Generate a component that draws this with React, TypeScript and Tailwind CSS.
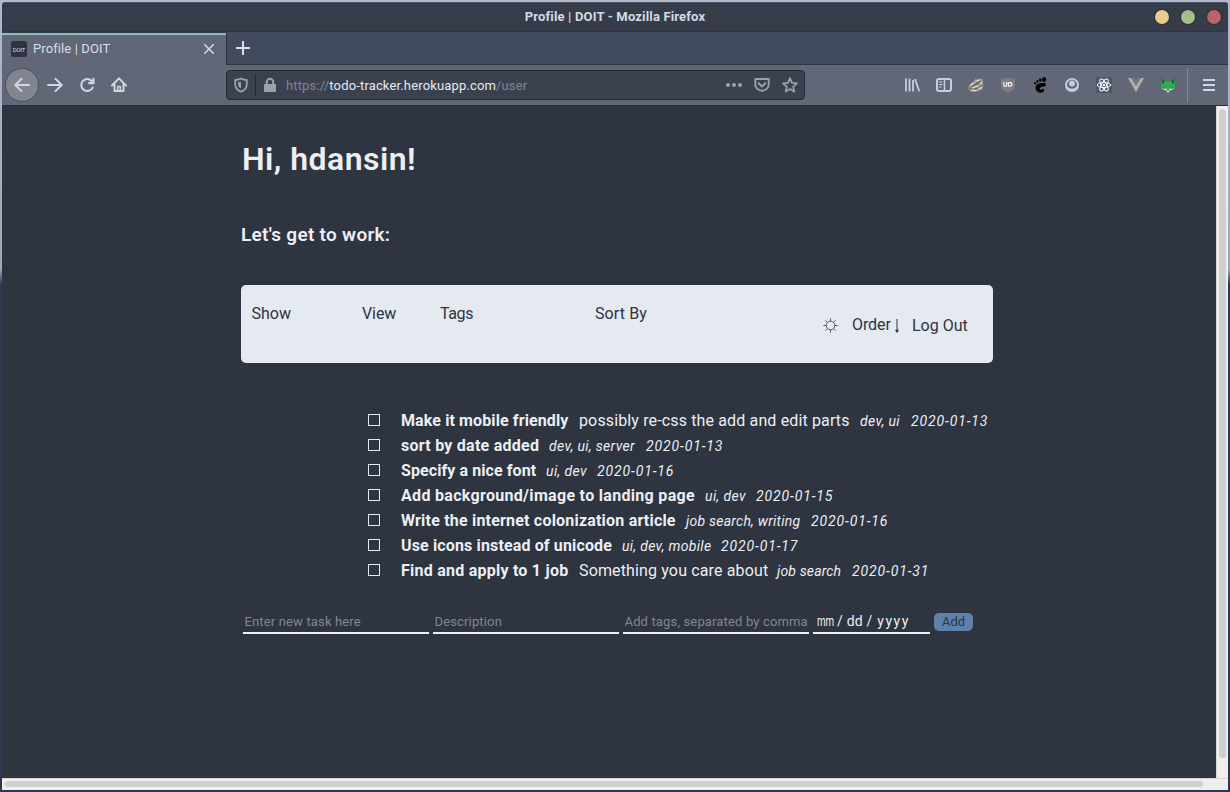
import type { ReactNode } from "react";

type Task = {
  title: string;
  titleClass: string;
  note?: string;
  noteClass?: string;
  tags: string;
  tagsClass: string;
  date: string;
};

const tasks: Task[] = [
  { title: "Make it mobile friendly", titleClass: "w-[168px] tracking-[0.11px]", note: "possibly re-css the add and edit parts", noteClass: "w-[271px]", tags: "dev, ui", tagsClass: "w-[41px] tracking-[0.35px]", date: "2020-01-13" },
  { title: "sort by date added", titleClass: "w-[138px] tracking-[0.25px]", tags: "dev, ui, server", tagsClass: "w-[87px] tracking-[0.34px]", date: "2020-01-13" },
  { title: "Specify a nice font", titleClass: "w-[135px] tracking-[0.08px]", tags: "ui, dev", tagsClass: "w-[41px] tracking-[0.4px]", date: "2020-01-16" },
  { title: "Add background/image to landing page", titleClass: "w-[294px] tracking-[0.31px]", tags: "ui, dev", tagsClass: "w-[41px] tracking-[0.4px]", date: "2020-01-15" },
  { title: "Write the internet colonization article", titleClass: "w-[275px] tracking-[0.2px]", tags: "job search, writing", tagsClass: "w-[115px] tracking-[0.24px]", date: "2020-01-16" },
  { title: "Use icons instead of unicode", titleClass: "w-[211px] tracking-[0.14px]", tags: "ui, dev, mobile", tagsClass: "w-[89px] tracking-[0.32px]", date: "2020-01-17" },
  { title: "Find and apply to 1 job", titleClass: "w-[168px] tracking-[0.24px]", note: "Something you care about", noteClass: "w-[188px]", tags: "job search", tagsClass: "w-[65px] tracking-[0.15px]", date: "2020-01-31" },
];

function Icon({ children, className = "" }: { children: ReactNode; className?: string }) {
  return (
    <svg viewBox="0 0 16 16" className={"h-4 w-4 shrink-0 " + className} fill="none" stroke="currentColor" strokeWidth="2" strokeLinecap="round" strokeLinejoin="round">
      {children}
    </svg>
  );
}

function TitleBar() {
  return (
    <div className="flex h-[29px] shrink-0 items-center rounded-t-[3px] border-t border-[#4a5261] bg-[#363c49]">
      <div className="w-[90px]" />
      <div className="flex-1 pb-px text-center text-[13px] font-bold tracking-[0.16px] text-[#d3dae6]">Profile | DOIT - Mozilla Firefox</div>
      <div className="flex w-[90px] justify-end gap-3 pr-[7px]">
        <i className="h-[14px] w-[14px] rounded-full bg-[#ebcb8b] ring-1 ring-[#292e39]" />
        <i className="h-[14px] w-[14px] rounded-full bg-[#a3be8c] ring-1 ring-[#292e39]" />
        <i className="h-[14px] w-[14px] rounded-full bg-[#bf616a] ring-1 ring-[#292e39]" />
      </div>
    </div>
  );
}

function Tabs() {
  return (
    <div className="flex h-[34px] shrink-0 border-t border-[#2e3440] bg-[#434c5e]">
      <div className="w-[224px] bg-[#363c49] pt-px">
        <div className="flex h-8 items-center border-t-2 border-[#8fbcbb] bg-[#616776] pb-[2px] pl-[9px] text-[13px] text-[#d8dee9]">
          <span className="flex h-4 w-4 items-center justify-center rounded-[2px] bg-[#2e3440] text-[6px] tracking-[-0.2px]">DOIT</span>
          <span className="ml-[6px] flex-1 tracking-[0.1px]">Profile | DOIT</span>
          <Icon className="mr-[9px] text-[#d0d6e2]"><path d="M3.7 3.7l8.6 8.6M12.3 3.7l-8.6 8.6" strokeWidth="1.6" /></Icon>
        </div>
      </div>
      <div className="flex flex-1 items-center border-b border-l border-[#2e3440] pl-[8px] text-[#d8dee9]">
        <Icon><path d="M8 1v14M1 8h14" strokeLinecap="butt" /></Icon>
      </div>
    </div>
  );
}

function UrlBar() {
  return (
    <div className="ml-[99px] flex h-[30px] w-[579px] items-center rounded-[4px] border border-[#242933] bg-[#3c4150] pl-[6px] text-[#9ca1b0]">
      <Icon>
        <path d="M8 1.5C6 2.6 4 3 2.2 3v4.2c0 4 2.6 6.3 5.8 7.4 3.2-1.1 5.800-3.400 5.800-7.400V3C12 3 10 2.600 8 1.500z" strokeWidth="1.8" />
        <path d="M8 4.600v7C6 10.500 5 9.200 5 7.200V5.200C6.200 5.100 7 5 8 4.600z" fill="currentColor" stroke="none" />
      </Icon>
      <div className="mx-[6px] h-[22px] w-px bg-[#242933]" />
      <Icon>
        <rect x="2" y="7" width="12" height="8" rx="1" fill="currentColor" stroke="none" />
        <path d="M4.800 8V5a3.200 3.200 0 0 1 6.400 0v3" />
      </Icon>
      <div className="ml-2 flex-1 pt-px text-[13px] tracking-[0.15px] text-[#7d8596]">https://<span className="text-[#e5e9f0]">todo-tracker.herokuapp.com</span>/user</div>
      <Icon className="mr-3"><g fill="currentColor" stroke="none"><circle cx="2" cy="8" r="2" /><circle cx="8" cy="8" r="2" /><circle cx="14" cy="8" r="2" /></g></Icon>
      <Icon className="mr-3">
        <path d="M1.300 2h13.400v5.500a6.700 6.200 0 0 1-13.400 0z" strokeWidth="1.900" />
        <path d="M4.700 6.300L8 9.400l3.300-3.100" />
      </Icon>
      <Icon className="mr-[6px]"><path d="M8 1.200l2 4.600 5 .5-3.800 3.300 1.100 5L8 12l-4.300 2.600 1.100-5L1 6.300l5-.5z" strokeWidth="1.700" /></Icon>
    </div>
  );
}

function Extensions() {
  return (
    <div className="flex items-center gap-4 text-[#c8ced9]">
      <Icon><path d="M2 1.500v13M5.500 1.500v13M9 3v11.500M11 2l4.200 12.300" strokeLinecap="butt" strokeWidth="1.800" /></Icon>
      <Icon>
        <rect x="1" y="2" width="14" height="12" rx="2" />
        <path d="M8.500 2v12" strokeWidth="1.500" />
        <path d="M3.300 5h3M3.300 7.500h3M3.300 10h2" strokeWidth="1" />
      </Icon>
      <Icon>
        <path d="M.3 10l1.700-3 4.500-3.500L7.500 1l2 1.200L13 1.300l2.500 2-.8 2.700 1 2-1.200 4.500-3.700 1.500-2.800 1.200-5-.4-2.500-2z" fill="#9d9d95" stroke="#686963" strokeWidth=".5" />
        <path d="M2.500 8.300l3-2.300M8 4.300l4-1.500M5 10.800l5-1.800M12 7l2-1.500M4 13.600l4-.2M11 12l2.500-1.500" stroke="#dcdbd2" strokeWidth="1.200" />
        <path d="M3 10l4-2.500 4-1M8.500 6l4-1.800M6 12.300l4-1.500M12 9.500l2-1M2 12l1.500-.5" stroke="#4c4e49" strokeWidth=".9" />
      </Icon>
      <Icon>
        <path d="M8 .3c2 1.200 4.500 1.700 7 1.800v5.500c0 4-3 6.600-7 8.200-4-1.600-7-4.200-7-8.200V2.100C3.500 2 6 1.500 8 .300z" fill="#7e7e7e" stroke="none" />
        <path d="M3.900 5.500V8a1.400 1.400 0 0 0 2.800 0V5.500M8.500 5.600h1.600a1.800 1.800 0 0 1 0 3.600H8.500z" stroke="#f0f0f0" strokeWidth="1.300" />
      </Icon>
      <Icon className="text-black">
        <g fill="currentColor" stroke="none">
          <ellipse cx="12.100" cy="2.600" rx="1.900" ry="2.500" transform="rotate(15 12.100 2.600)" />
          <ellipse cx="8.300" cy="3" rx="1.250" ry="1.700" transform="rotate(-8 8.300 3)" />
          <ellipse cx="5.400" cy="4.400" rx="1.050" ry="1.500" transform="rotate(-20 5.400 4.400)" />
          <ellipse cx="3.200" cy="6.300" rx=".9" ry="1.250" transform="rotate(-30 3.200 6.300)" />
          <path d="M12.700 6.300C8.500 5.400 3 7.300 3.500 11.200c.4 3.300 3.100 4.700 5.700 4.500 2-.2 3.500-2.100 2.700-3.300-.9-1.100-2 .8-3.400.1-2-1 .2-2.600 2.400-2.700 2.800-.2 4.300-2.900 1.800-3.500z" />
        </g>
      </Icon>
      <Icon>
        <circle cx="8" cy="8" r="7" fill="currentColor" stroke="none" />
        <path d="M8 2.800a4.900 4.900 0 0 0-4.700 6.400c.8 1.500 2.300 2.400 4.700 2.400s3.900-.9 4.700-2.400A4.900 4.900 0 0 0 8 2.800z" fill="#616776" stroke="none" />
        <circle cx="8" cy="6.500" r="2.900" fill="currentColor" stroke="none" />
      </Icon>
      <Icon className="bg-[#4c566a] text-white">
        <g strokeWidth="1">
          <ellipse cx="8" cy="8" rx="6.700" ry="2.600" />
          <ellipse cx="8" cy="8" rx="6.700" ry="2.600" transform="rotate(60 8 8)" />
          <ellipse cx="8" cy="8" rx="6.700" ry="2.600" transform="rotate(120 8 8)" />
          <circle cx="8" cy="8" r="1.300" fill="currentColor" stroke="none" />
        </g>
      </Icon>
      <Icon>
        <path d="M0 1h3.300L8 9.100 12.700 1H16L8 14.900z" fill="#b0b0b0" stroke="none" />
        <path d="M3.300 1h3L8 3.900 9.700 1h3L8 9.100z" fill="#7b7b7b" stroke="none" />
      </Icon>
      <Icon>
        <g stroke="none">
          <path d="M1 .300l4.500 4.200h5L15 .300l-.3 7 .8 3.200-4 1.500L8 15.500 4.500 12l-4-1.500.8-3.200z" fill="#2fae55" />
          <path d="M1 .300l3.900 4.200L2.500 7.500zM15 .300l-3.900 4.200 2.400 3z" fill="#07702b" />
          <path d="M1 10.700l2.600 1 1.400.4 1.500-.6L8 14l1.500-2.500 1.500.6 1.400-.4 2.600-1-2.500 2-1.800.2L8 16l-2.700-3.100-1.800-.2z" fill="#cbd3d2" />
          <path d="M4 8.700l2 .8-.8.500zM12 8.700l-2 .8.800.5z" fill="#14552c" />
          <path d="M7.200 13.200h1.600L8 14.200z" fill="#20252c" />
        </g>
      </Icon>
    </div>
  );
}

function Toolbar() {
  return (
    <div className="flex h-[41px] shrink-0 items-center border-b border-[#272c36] bg-[#616776] text-[#d0d6e2]">
      <div className="ml-[3px] flex h-[34px] w-[34px] items-center justify-center rounded-full border border-[#4b505d] bg-[#81858f]">
        <Icon><path d="M15 8H1.500M7.500 1.900L1.300 8l6.200 6.100" /></Icon>
      </div>
      <div className="ml-2 flex gap-4">
        <Icon><path d="M1 8h13.500M8.500 1.900L14.700 8l-6.200 6.100" /></Icon>
        <Icon><path d="M13.700 10.600A6 6 0 1 1 12.700 4" /><path d="M15.500 1v6.200H9.300V5h4V1z" fill="currentColor" stroke="none" /></Icon>
        <Icon><path d="M1 8.500L8 1.400l7 7.100M3.500 7.500V14h9V7.500" /><path d="M6.700 14V9.500h2.600V14" strokeWidth="1.500" /></Icon>
      </div>
      <UrlBar />
      <div className="flex-1" />
      <Extensions />
      <div className="ml-[11px] h-[34px] w-px bg-[#838997]" />
      <Icon className="mr-[11px] ml-[13px]"><path d="M2 3h12M2 8h12M2 13h12" strokeLinecap="butt" /></Icon>
    </div>
  );
}

function FilterBar() {
  return (
    <nav className="mt-[38px] flex h-[78px] w-[752px] rounded-[5px] bg-[#e5e9f0] pl-[10.500px] text-[16px] leading-6 text-[#2e3440]">
      <span className="w-[110.500px] pt-[17px]">Show</span>
      <span className="w-[78px] pt-[17px] tracking-[-0.1px]">View</span>
      <span className="w-[155px] pt-[17px] tracking-[-0.400px]">Tags</span>
      <span className="w-[227px] pt-[17px] tracking-[0.1px]">Sort By</span>
      <svg viewBox="0 0 16 16" className="mt-[33px] h-4 w-4" fill="none" stroke="currentColor" strokeWidth=".75">
        <circle cx="8.500" cy="7.500" r="4.300" />
        <path d="M8.500 .300v2.900M8.500 11.800v2.900M1.300 7.500h2.900M12.800 7.500h2.900M3.400 2.400l2 2M11.600 10.600l2 2M13.600 2.400l-2 2M5.400 10.600l-2 2" />
      </svg>
      <span className="ml-[14px] w-[42px] pt-7 tracking-[-0.1px]">Order</span>
      <svg viewBox="0 0 6 16" className="mt-[33px] h-4 w-[6px]" fill="currentColor">
        <path d="M2.500 1h1v10.700H5L3 15.200 1 11.700h1.500z" />
      </svg>
      <span className="ml-3 pt-[29px] whitespace-nowrap">Log Out</span>
    </nav>
  );
}

function TaskRow({ task }: { task: Task }) {
  return (
    <li className="flex h-[25px] items-center whitespace-nowrap">
      <i className="mr-[21px] mb-px h-3 w-3 border border-[#e5e9f0]" />
      <b className={"mr-[10px] shrink-0 " + task.titleClass}>{task.title}</b>
      {task.note && <span className={"mr-[10px] shrink-0 tracking-[0.14px] " + task.noteClass}>{task.note}</span>}
      <em className={"mr-[10px] shrink-0 pt-0.5 text-[14px] " + task.tagsClass}>{task.tags}</em>
      <em className="pt-0.5 text-[14px] tracking-[0.88px]">{task.date}</em>
    </li>
  );
}

function AddForm() {
  return (
    <form className="mt-[27px] ml-[2px] flex h-6 gap-1 text-[13px]">
      <input className="w-[186px] border-b-2 border-[#eceff4] bg-transparent px-[1.500px] pt-px tracking-[0.15px] placeholder:text-[#83878f]" placeholder="Enter new task here" />
      <input className="w-[186px] border-b-2 border-[#eceff4] bg-transparent px-[1.500px] pt-px tracking-[0.15px] placeholder:text-[#83878f]" placeholder="Description" />
      <input className="w-[186px] border-b-2 border-[#eceff4] bg-transparent px-[1.500px] pt-px tracking-[0.15px] placeholder:text-[#83878f]" placeholder="Add tags, separated by comma" />
      <div className="flex w-[117px] items-center gap-1 border-b-2 border-[#eceff4] pl-[4px] text-[14px]">
        <span className="inline-block w-4 origin-left scale-x-[0.7]">mm</span><span>/</span>
        <span>dd</span><span>/</span><span className="pl-px tracking-[1.500px]">yyyy</span>
      </div>
      <button type="button" className="mt-[3px] h-[18px] w-[39px] rounded-[5px] bg-[#5e81ac] leading-[18px] text-[#2e3440]">Add</button>
    </form>
  );
}

export default function App() {
  return (
    <div className="h-[792px] w-[1230px] overflow-hidden bg-linear-to-b from-[#b3b8cc] from-0% via-[#a0a6b8] via-34% to-[#2c3856] to-36% px-[2px] pt-[2px] pb-[2px] font-[Roboto,sans-serif]">
      <div className="flex h-[788px] flex-col">
        <TitleBar />
        <Tabs />
        <Toolbar />
        <div className="flex min-h-0 flex-1 bg-[#2e3440]">
          <main className="flex-1 pl-[239px] text-[#eceff4]">
            <h1 className="mt-[33px] ml-px text-[32px] leading-10 font-semibold tracking-[0.45px]">Hi, hdansin!</h1>
            <h2 className="mt-[44px] text-[19px] leading-6 font-semibold tracking-[0.28px]">Let's get to work:</h2>
            <FilterBar />
            <ul className="mt-[45px] ml-[127px] text-[16px]">
              {tasks.map((task) => <TaskRow key={task.title} task={task} />)}
            </ul>
            <AddForm />
          </main>
          <div className="w-3 border-l border-[#d8d4d0] bg-[#f0eeec] px-[2px] pt-[3px]">
            <div className="h-[649px] w-[7px] rounded-full bg-[#cfcfcf]" />
          </div>
        </div>
        <div className="flex h-3 shrink-0 border-t border-[#d8d4d0] bg-[#f0eeec]">
          <div className="mt-[2px] ml-[3px] h-[6px] w-[1198px] rounded-full bg-[#cfcfcf]" />
        </div>
      </div>
    </div>
  );
}
